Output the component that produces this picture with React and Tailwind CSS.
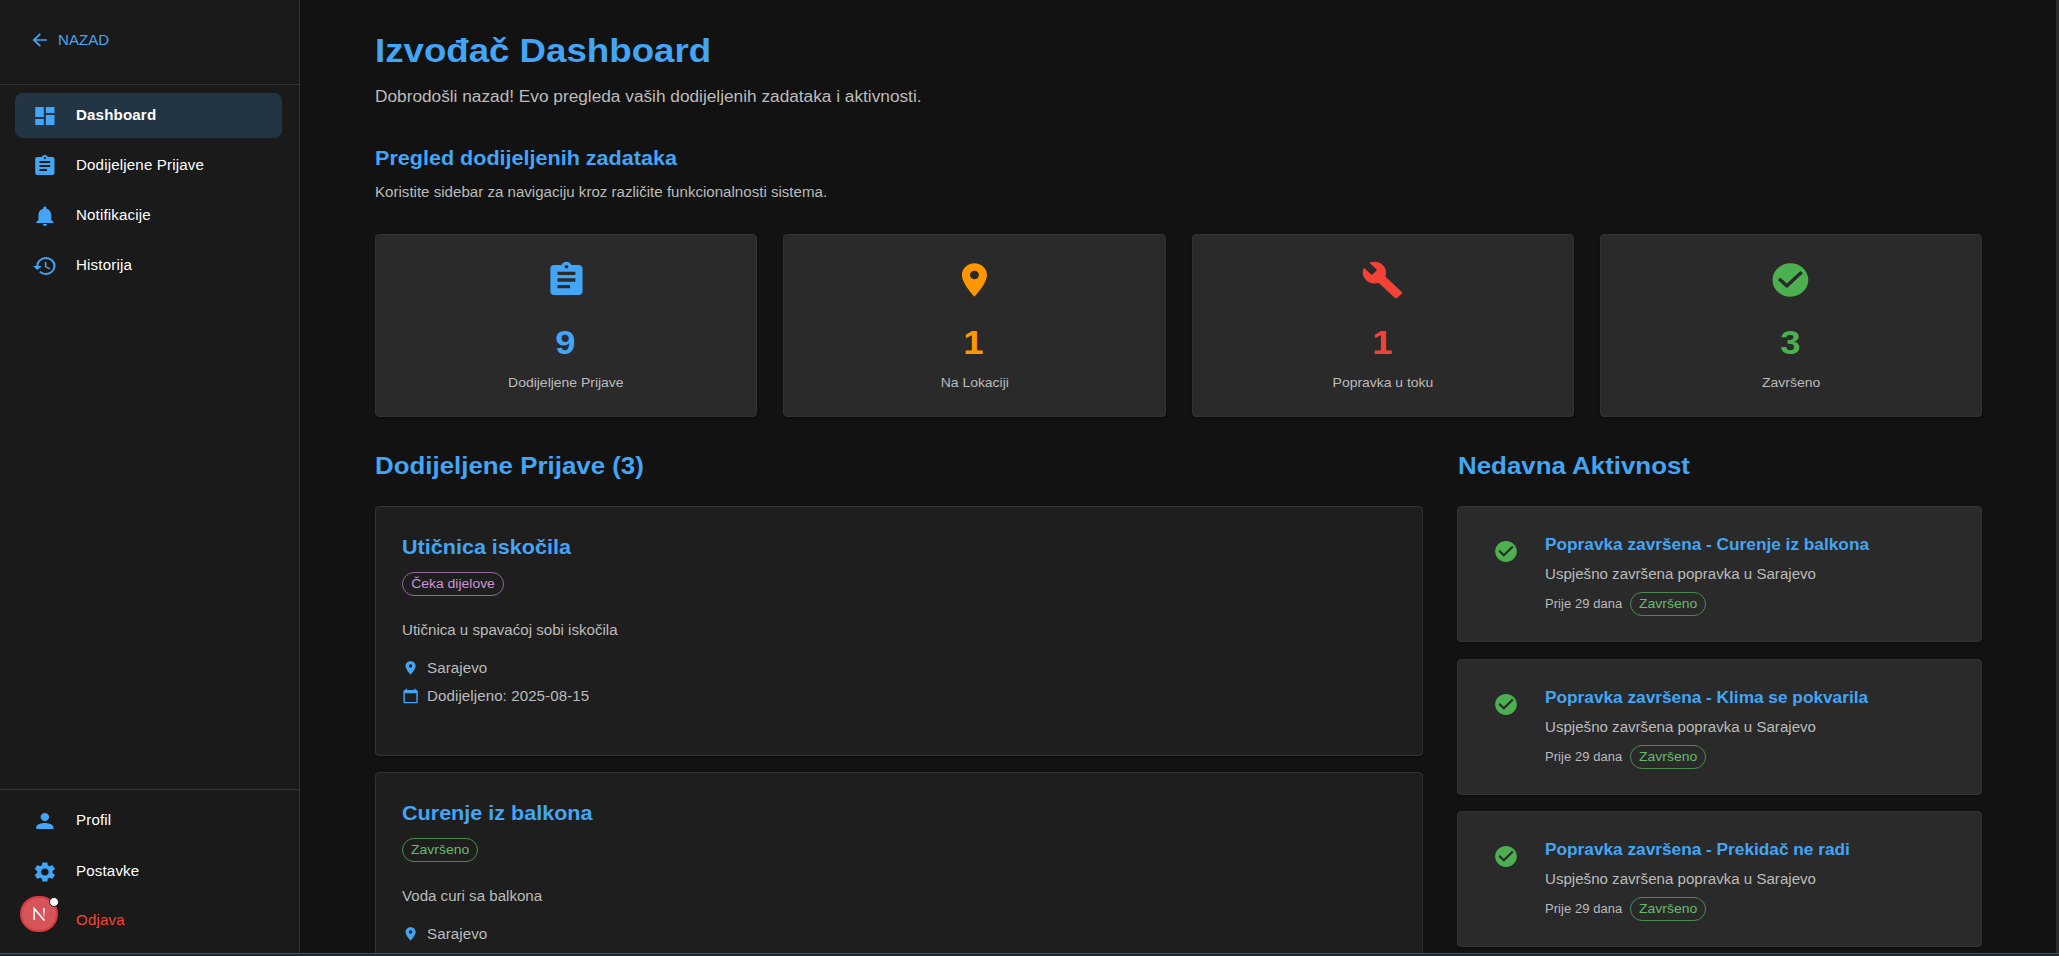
import React from "react";
import {
  MdArrowBack,
  MdAssignment,
  MdBuild,
  MdCalendarToday,
  MdCheckCircle,
  MdDashboard,
  MdHistory,
  MdLocationOn,
  MdNotifications,
  MdPerson,
  MdSettings,
} from "react-icons/md";

function T({ children, center = false, className = "" }) {
  return (
    <span
      className={`inline-block whitespace-nowrap ${center ? "origin-center scale-x-[1.0724]" : "origin-left scale-x-[1.078]"} ${className}`}
    >
      {children}
    </span>
  );
}

function NavItem({ icon: Icon, label, active = false, danger = false }) {
  return (
    <li
      className={`flex h-[45px] items-center rounded-lg pl-[17px] text-[14px] ${active ? "bg-[#233544] font-bold" : ""} ${danger ? "text-[#f44336]" : "text-white"}`}
    >
      <span className="mr-[18px] h-6 w-[25.7px] shrink-0">
        {Icon && <Icon preserveAspectRatio="none" className="h-6 w-[25.7px] text-[#42a5f5]" />}
      </span>
      <T className="tracking-[0.15px]">{label}</T>
    </li>
  );
}

function Sidebar() {
  return (
    <aside className="flex h-full w-[300px] shrink-0 flex-col border-r border-[#333333] bg-[#1a1a1a]">
      <div className="flex h-[85px] items-start border-b border-[#333333] pt-[30px] pl-[29px]">
        <button className="flex h-5 items-center text-[14px] text-[#42a5f5]">
          <MdArrowBack preserveAspectRatio="none" className="mr-[8px] h-5 w-[21.4px]" />
          <T>NAZAD</T>
        </button>
      </div>
      <ul className="flex flex-1 flex-col gap-[5px] pt-[8px] pr-[17px] pl-[15px]">
        <NavItem icon={MdDashboard} label="Dashboard" active />
        <NavItem icon={MdAssignment} label="Dodijeljene Prijave" />
        <NavItem icon={MdNotifications} label="Notifikacije" />
        <NavItem icon={MdHistory} label="Historija" />
      </ul>
      <ul className="flex h-[164px] flex-col border-t border-[#333333] px-[15px] pt-[8px]">
        <NavItem icon={MdPerson} label="Profil" />
        <li className="h-[6px]" />
        <NavItem icon={MdSettings} label="Postavke" />
        <li className="h-[4px]" />
        <NavItem label="Odjava" danger />
      </ul>
    </aside>
  );
}

function StatCard({ icon: Icon, value, label, color }) {
  return (
    <div className="flex h-[183px] flex-col items-center rounded-[4px] border border-[#333333] bg-[#2a2a2a] pt-[25px] shadow-[0_2px_1px_-1px_rgba(0,0,0,0.2),0_1px_1px_0_rgba(0,0,0,0.14),0_1px_3px_0_rgba(0,0,0,0.12)]">
      <Icon preserveAspectRatio="none" className={`h-10 w-[42.9px] ${color}`} />
      <div className={`mt-[21px] mr-[1px] text-[34px] leading-[42px] font-bold ${color}`}>
        <T center>{value}</T>
      </div>
      <div className="mt-[10px] text-[13px] leading-5 text-[#bbbbbb]">
        <T center>{label}</T>
      </div>
    </div>
  );
}

function Chip({ label, tone }) {
  return (
    <span
      className={`inline-flex h-6 items-center justify-center rounded-full border text-[13px] ${tone === "purple" ? "w-[102px] border-[#93689b] text-[#ce93d8]" : "w-[76px] border-[#4a8a4e] text-[#66bb6a]"}`}
    >
      <T center>{label}</T>
    </span>
  );
}

function TaskCard({ title, chip, tone, description, place, date }) {
  return (
    <article className="h-[250px] shrink-0 rounded-[4px] border border-[#333333] bg-[#1e1e1e] pt-[24px] pl-[26px] shadow-[0_2px_1px_-1px_rgba(0,0,0,0.2),0_1px_3px_0_rgba(0,0,0,0.12)]">
      <h3 className="text-[20px] leading-8 font-bold text-[#42a5f5]">
        <T>{title}</T>
      </h3>
      <div className="mt-[9px] flex">
        <Chip label={chip} tone={tone} />
      </div>
      <p className="mt-[24px] text-[14px] leading-5 text-[#bbbbbb]">
        <T>{description}</T>
      </p>
      <div className="mt-[18px] flex items-center text-[14px] leading-5 tracking-[0.08px] text-[#bbbbbb]">
        <MdLocationOn preserveAspectRatio="none" className="mr-[8px] h-4 w-[17.2px] text-[#42a5f5]" />
        <T>{place}</T>
      </div>
      {date && (
        <div className="mt-[8px] flex items-center text-[14px] leading-5 tracking-[0.08px] text-[#bbbbbb]">
          <MdCalendarToday preserveAspectRatio="none" className="mr-[8px] h-4 w-[17.2px] text-[#42a5f5]" />
          <T>{date}</T>
        </div>
      )}
    </article>
  );
}

function ActivityCard({ title }) {
  return (
    <article className="flex h-[136px] shrink-0 rounded-[4px] border border-[#333333] bg-[#2a2a2a] pt-[26px] pl-[35px] shadow-[0_2px_1px_-1px_rgba(0,0,0,0.2),0_1px_3px_0_rgba(0,0,0,0.12)]">
      <MdCheckCircle preserveAspectRatio="none" className="mt-[6px] h-[25px] w-[26px] shrink-0 text-[#4caf50]" />
      <div className="ml-[26px]">
        <h3 className="text-[16px] leading-6 font-bold text-[#42a5f5]">
          <T>{title}</T>
        </h3>
        <p className="mt-[7px] text-[14px] leading-5 text-[#bbbbbb]">
          <T>Uspješno završena popravka u Sarajevo</T>
        </p>
        <div className="mt-[8px] flex">
          <span className="w-[85px] text-[12px] leading-[24px] tracking-[0.08px] text-[#bbbbbb]">
            <T>Prije 29 dana</T>
          </span>
          <Chip label="Završeno" tone="green" />
        </div>
      </div>
    </article>
  );
}

function Badge() {
  return (
    <div className="absolute top-[896px] left-[20px] flex h-9 w-[38px] items-center justify-center rounded-full border-2 border-[#d8383f] bg-[#d5555b]">
      <svg viewBox="0 0 14 14" className="h-[14px] w-[15px]" fill="none">
        <defs>
          <linearGradient id="fade" x1="0" y1="0" x2="0" y2="1">
            <stop offset="0.3" stopColor="white" />
            <stop offset="1" stopColor="white" stopOpacity="0.1" />
          </linearGradient>
        </defs>
        <path d="M1.6 13V1.4L12 13.6" stroke="white" strokeWidth="1.5" />
        <rect x="10.6" y="1" width="1.5" height="9.5" fill="url(#fade)" />
      </svg>
      <span className="absolute -top-[1px] right-[-3px] h-[10px] w-[10px] rounded-full border border-[#1a1a1a] bg-white" />
    </div>
  );
}

export default function App() {
  return (
    <div className="relative flex h-[956px] w-[2059px] flex-col overflow-hidden bg-[#121212] font-['Liberation_Sans',Arial,sans-serif]">
      <div className="flex h-[953px] overflow-hidden">
        <Sidebar />
        <main className="flex-1 overflow-hidden pr-[74px] pl-[75px]">
          <h1 className="mt-[29px] text-[34px] leading-[42px] font-bold text-[#42a5f5]">
            <T>Izvođač Dashboard</T>
          </h1>
          <p className="mt-[14px] text-[16px] leading-6 text-[#bbbbbb]">
            <T>Dobrodošli nazad! Evo pregleda vaših dodijeljenih zadataka i aktivnosti.</T>
          </p>
          <h2 className="mt-[33px] text-[20px] leading-8 font-bold text-[#42a5f5]">
            <T>Pregled dodijeljenih zadataka</T>
          </h2>
          <p className="mt-[8px] text-[14px] leading-5 text-[#bbbbbb]">
            <T>Koristite sidebar za navigaciju kroz različite funkcionalnosti sistema.</T>
          </p>
          <section className="mt-[32px] grid grid-cols-4 gap-[26px]">
            <StatCard icon={MdAssignment} value="9" label="Dodijeljene Prijave" color="text-[#42a5f5]" />
            <StatCard icon={MdLocationOn} value="1" label="Na Lokaciji" color="text-[#ff9800]" />
            <StatCard icon={MdBuild} value="1" label="Popravka u toku" color="text-[#f44336]" />
            <StatCard icon={MdCheckCircle} value="3" label="Završeno" color="text-[#4caf50]" />
          </section>
          <div className="mt-[33px] flex gap-[34px]">
            <section className="w-[1048px]">
              <h2 className="text-[24px] leading-8 font-bold text-[#42a5f5]">
                <T>Dodijeljene Prijave (3)</T>
              </h2>
              <div className="mt-[24px] flex flex-col gap-[16px]">
                <TaskCard
                  title="Utičnica iskočila"
                  chip="Čeka dijelove"
                  tone="purple"
                  description="Utičnica u spavaćoj sobi iskočila"
                  place="Sarajevo"
                  date="Dodijeljeno: 2025-08-15"
                />
                <TaskCard
                  title="Curenje iz balkona"
                  chip="Završeno"
                  tone="green"
                  description="Voda curi sa balkona"
                  place="Sarajevo"
                />
              </div>
            </section>
            <section className="flex-1">
              <h2 className="pl-[1px] text-[24px] leading-8 font-bold text-[#42a5f5]">
                <T>Nedavna Aktivnost</T>
              </h2>
              <div className="mt-[24px] flex flex-col gap-[16.5px]">
                <ActivityCard title="Popravka završena - Curenje iz balkona" />
                <ActivityCard title="Popravka završena - Klima se pokvarila" />
                <ActivityCard title="Popravka završena - Prekidač ne radi" />
              </div>
            </section>
          </div>
        </main>
        <div className="w-[3px] shrink-0 bg-[#2c2c2c]" />
      </div>
      <div className="h-[3px] border-t border-[#46525c] bg-[#16283a]" />
      <Badge />
    </div>
  );
}
